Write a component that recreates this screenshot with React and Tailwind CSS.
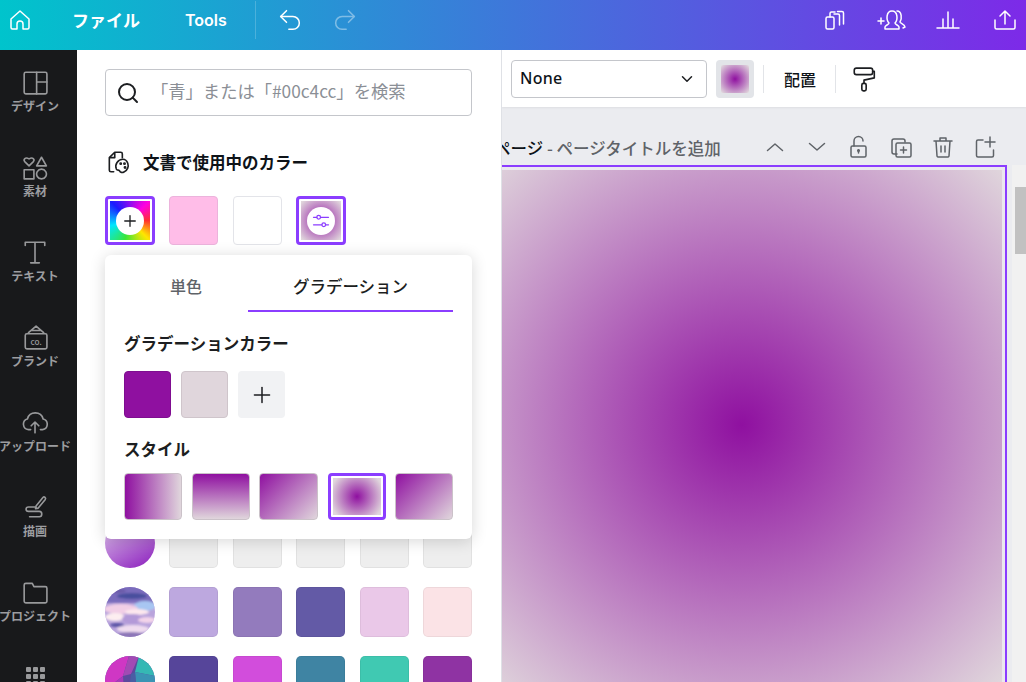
import { ChevronDown, Search, Plus, Undo2, Redo2 } from "lucide-react";

const jp = "font-['Noto_Sans_CJK_JP','Noto_Sans',sans-serif]";

function RailItem({ label, children }) {
  return (
    <div className="flex h-[85px] w-[70px] shrink-0 flex-col items-center pt-[19px]">
      <div className="h-[26px] w-[26px] text-[#98999b]">{children}</div>
      <div className="mt-[4px] text-[12px] leading-[14px] font-bold whitespace-nowrap text-[#9c9da0]">{label}</div>
    </div>
  );
}

function IconSvg({ children, className = "" }) {
  return (
    <svg viewBox="0 0 24 24" fill="none" stroke="currentColor" strokeWidth="1.5" strokeLinecap="round" strokeLinejoin="round" className={"h-full w-full " + className}>
      {children}
    </svg>
  );
}

function CloudCircle() {
  return (
    <svg viewBox="0 0 50 50" className="h-[50px] w-[50px] shrink-0 rounded-full">
      <defs>
        <filter id="soft"><feGaussianBlur stdDeviation="0.9" /></filter>
      </defs>
      <rect width="50" height="50" fill="#b9a4dc" />
      <g filter="url(#soft)">
        <rect x="-2" y="-2" width="54" height="18" fill="#7a6cbc" />
        <ellipse cx="27" cy="9" rx="15" ry="3" fill="#4a4f9e" />
        <ellipse cx="12" cy="4" rx="9" ry="2" fill="#6a5aa8" />
        <ellipse cx="40" cy="19" rx="11" ry="5" fill="#a8c6f2" />
        <ellipse cx="16" cy="22" rx="17" ry="5" fill="#f2cfe6" />
        <ellipse cx="32" cy="25" rx="12" ry="3" fill="#fde8ee" />
        <ellipse cx="10" cy="30" rx="10" ry="4" fill="#fdeef0" />
        <ellipse cx="28" cy="32" rx="11" ry="5" fill="#b39ad8" />
        <ellipse cx="42" cy="33" rx="9" ry="3" fill="#f3d4ea" />
        <ellipse cx="12" cy="38" rx="7" ry="2" fill="#5b55a6" />
        <ellipse cx="28" cy="42" rx="16" ry="4" fill="#efdcef" />
        <ellipse cx="26" cy="48" rx="14" ry="3" fill="#8d77b8" />
      </g>
    </svg>
  );
}

function PolyCircle() {
  return (
    <svg viewBox="0 0 50 50" className="h-[50px] w-[50px] shrink-0 rounded-full">
      <rect width="50" height="50" fill="#5c4a9e" />
      <polygon points="0,0 24,0 18,20 0,34" fill="#cf37c4" />
      <polygon points="0,34 18,20 20,50 0,50" fill="#a83ab8" />
      <polygon points="24,0 34,0 26,18 18,20" fill="#a24ab4" />
      <polygon points="34,0 50,0 50,20 30,16" fill="#35b8b4" />
      <polygon points="30,16 50,20 50,50 32,40" fill="#3a94b4" />
      <polygon points="26,18 30,16 32,40 24,34" fill="#4a5ea4" />
    </svg>
  );
}

const rows = [
  { circle: <div className="h-[50px] w-[50px] shrink-0 rounded-full bg-[linear-gradient(150deg,#e4cff0,#8a1cbc)]" />, colors: ["#eeeeee", "#eeeeee", "#eeeeee", "#eeeeee", "#eeeeee"] },
  { circle: <CloudCircle />, colors: ["#bda8df", "#937bbd", "#635aa6", "#eac8e8", "#fbe3e6"] },
  { circle: <PolyCircle />, colors: ["#56459a", "#d24ddc", "#3f84a3", "#40c9b2", "#8f33a3"] },
];

const styles = [
  { bg: "bg-[linear-gradient(90deg,#8f10a0,#e0d6dc)]", w: "w-[58px]" },
  { bg: "bg-[linear-gradient(180deg,#8f10a0,#e0d6dc)]", w: "w-[58px]" },
  { bg: "bg-[linear-gradient(135deg,#8f10a0,#e0d6dc)]", w: "w-[59px]" },
  { bg: "", w: "" },
  { bg: "bg-[linear-gradient(135deg,#8f10a0,#e0d6dc)]", w: "w-[58px]" },
];

function Swatch({ color }) {
  return <div className="h-[50px] w-[49px] rounded-[5px] border border-black/5" style={{ backgroundColor: color }} />;
}

export default function App() {
  return (
    <div className={"flex h-[682px] w-[1026px] flex-col overflow-hidden bg-white " + jp}>
      {/* top bar */}
      <header className="flex h-[50px] shrink-0 items-center bg-[linear-gradient(90deg,#00c4cc,#7d2ae8)] pb-[10px] text-white">
        <div className="ml-[8px] h-[24px] w-[24px]">
          <IconSvg>
            <path d="M3 11 12 3l9 8v8.500a1.500 1.500 0 0 1-1.500 1.500H15v-5a3 3 0 0 0-6 0v5H4.500A1.500 1.500 0 0 1 3 19.500Z" />
          </IconSvg>
        </div>
        <div className="ml-[40px] text-[17px] font-bold">ファイル</div>
        <div className="ml-[45px] font-['Inter',sans-serif] text-[16px] font-semibold">Tools</div>
        <div className="ml-[28px] h-[38px] w-px bg-white/20" />
        <Undo2 className="ml-[20px] h-[28px] w-[28px]" strokeWidth={1.3} />
        <Redo2 className="ml-[27px] h-[28px] w-[28px] opacity-40" strokeWidth={1.3} />
        <div className="flex-1" />
        <div className="mr-[30px] h-[24px] w-[24px]">
          <IconSvg>
            <rect x="3" y="9" width="8" height="12" rx="1.500" />
            <path d="M7 9V5.500A1.500 1.500 0 0 1 8.500 4H12M11 6h4a1.500 1.500 0 0 1 1.500 1.500V17M14.500 3.500H19a1.500 1.500 0 0 1 1.500 1.500v11" />
          </IconSvg>
        </div>
        <div className="mr-[29px] h-[24px] w-[30px]">
          <svg viewBox="0 0 30 24" fill="none" stroke="currentColor" strokeWidth="1.5" strokeLinecap="round" strokeLinejoin="round" className="h-full w-full">
            <path d="M1 13h6M4 10v6" />
            <path d="M8 21v-2c0-1.500 4-2.500 4-4-3-3-3-12 3-12s6 9 3 12c0 1.500 4 2.500 4 4v2Z" />
            <path d="M20 3c5 0 5 8 3 11 0 1.500 5 2 5 5l-2 1" />
          </svg>
        </div>
        <div className="mr-[33px] h-[24px] w-[24px]">
          <IconSvg>
            <path d="M1 20h22M7 19v-8M12 19V4M17 19v-8" />
          </IconSvg>
        </div>
        <div className="mr-[9px] h-[24px] w-[24px]">
          <IconSvg>
            <path d="M2 12v7.500A1.500 1.500 0 0 0 3.500 21h17a1.500 1.500 0 0 0 1.500-1.500V12M12 16V3M7 8l5-5 5 5" />
          </IconSvg>
        </div>
      </header>

      <div className="flex min-h-0 flex-1">
        {/* left rail */}
        <nav className="flex w-[77px] shrink-0 flex-col overflow-hidden bg-[#18191b]">
          <RailItem label="デザイン">
            <IconSvg>
              <rect x="2" y="3" width="21" height="20" rx="1.500" /><path d="M13.500 3v20M13.500 12H23" />
            </IconSvg>
          </RailItem>
          <RailItem label="素材">
            <IconSvg>
              <path d="M6.500 11 2.500 7c-1.500-2 .5-4.500 4-2.500 3.500-2 5.500.5 4 2.500ZM18 3l4.500 8h-9ZM2 14.500h9v8.500H2ZM18 14a4.500 4.500 0 1 0 .01 0Z" />
            </IconSvg>
          </RailItem>
          <RailItem label="テキスト">
            <IconSvg>
              <path d="M3 6V3h18v3M12 3v19M8 22h8" />
            </IconSvg>
          </RailItem>
          <RailItem label="ブランド">
            <IconSvg>
              <rect x="3" y="9" width="20" height="14" rx="1.500" /><path d="m6 8 7-6 7 6M9 6h8" />
              <text x="13" y="19" fontSize="6" fontWeight="700" textAnchor="middle" fill="currentColor" stroke="none">CO.</text>
            </IconSvg>
          </RailItem>
          <RailItem label="アップロード">
            <IconSvg>
              <path d="M8 19H6a5 5 0 0 1-1-9.800 7.500 7.500 0 0 1 14.500 0A5 5 0 0 1 19 19h-2M12 22V12M8.500 15.500 12 12l3.500 3.500" />
            </IconSvg>
          </RailItem>
          <RailItem label="描画">
            <IconSvg>
              <path d="M13 11l6.500-8c1-1 3 .5 2 2L15 13l-2.500.5Z" />
              <path d="M12 12H6c-3 0-3 4 0 4h10c3 0 3 5 0 5H7" />
            </IconSvg>
          </RailItem>
          <RailItem label="プロジェクト">
            <IconSvg>
              <path d="M2 5.500A1.500 1.500 0 0 1 3.500 4h6l1.500 3h10.500A1.500 1.500 0 0 1 23 8.500v12a1.500 1.500 0 0 1-1.500 1.500h-18A1.500 1.500 0 0 1 2 20.500Z" />
            </IconSvg>
          </RailItem>
          <div className="flex w-[70px] justify-center pt-[22px]">
            <div className="grid grid-cols-3 gap-[2px]">
              {Array.from({ length: 9 }).map((_, i) => (
                <div key={i} className="h-[5px] w-[5px] rounded-[1px] bg-[#98999b]" />
              ))}
            </div>
          </div>
        </nav>

        {/* colour panel */}
        <aside className="relative w-[425px] shrink-0 overflow-hidden border-r border-[#dfe1e6] bg-white pt-[19px] pl-[28px]">
          <div className="flex h-[47px] w-[367px] items-center rounded-[4px] border border-[#c4c6cb] pl-[10px]">
            <Search className="h-[24px] w-[24px] text-[#1c1e21]" strokeWidth={2} />
            <span className="ml-[11px] pb-[4px] text-[17.3px] whitespace-nowrap text-[#8b8f96] [text-spacing-trim:space-all]">「青」または「#00c4cc」を検索</span>
          </div>

          <div className="mt-[32px] flex h-[28px] items-center">
            <div className="h-[26px] w-[26px] text-[#1c1e21]">
              <IconSvg>
                <path d="M8 21H5.500A1.500 1.500 0 0 1 4 19.500V8l5-5h5.500A1.500 1.500 0 0 1 16 4.500V8" />
                <path d="M9 3.500V8H4.500" />
                <path d="M16.500 9.500a6.500 6.500 0 0 0-6 9c.8 1.500 2.500.5 3 1.700.5 1.500 2.500 1.800 4 1 3.500-1.500 4.500-5.200 3.500-8-.8-2.200-2.500-3.700-4.500-3.700Z" />
                <circle cx="14.500" cy="13.500" r=".6" />
                <circle cx="18" cy="13.500" r=".6" />
                <circle cx="18.500" cy="17" r=".6" />
              </IconSvg>
            </div>
            <span className="ml-[12px] text-[16.5px] font-bold text-[#0e1318]">文書で使用中のカラー</span>
          </div>

          <div className="mt-[20px] flex h-[49px]">
            <div className="flex h-[49px] w-[50px] items-center justify-center rounded-[4px] border-[3px] border-[#8b3dff] p-[2px]">
              <div className="flex h-full w-full items-center justify-center bg-[conic-gradient(from_315deg,#1a1aff_0deg,#ff00e0_90deg,#ff3030_135deg,#ffe600_180deg,#39e639_240deg,#00e6ff_300deg,#1a1aff_360deg)]">
                <div className="flex h-[28px] w-[28px] shrink-0 items-center justify-center rounded-full bg-white">
                  <Plus className="h-[18px] w-[18px] text-[#1c1e21]" strokeWidth={1.75} />
                </div>
              </div>
            </div>
            <div className="ml-[14px] h-[49px] w-[49px] rounded-[4px] border border-[#ecb3dc] bg-[#ffbde8]" />
            <div className="ml-[15px] h-[49px] w-[49px] rounded-[4px] border border-[#e3e4e9] bg-white" />
            <div className="ml-[14px] flex h-[49px] w-[50px] items-center justify-center rounded-[4px] border-[3px] border-[#8b3dff] p-[2px]">
              <div className="flex h-full w-full items-center justify-center bg-[radial-gradient(circle,#8f10a0,#e0d6dc_95%)]">
                <div className="flex h-[28px] w-[28px] shrink-0 items-center justify-center rounded-full bg-white">
                  <div className="h-[20px] w-[20px] text-[#8b3dff]">
                    <IconSvg>
                      <path d="M3 7.500h4M11.500 7.500H21M3 16.500h10M17.500 16.500H21" />
                      <circle cx="9.200" cy="7.500" r="2.200" />
                      <circle cx="15.300" cy="16.500" r="2.200" />
                    </IconSvg>
                  </div>
                </div>
              </div>
            </div>
          </div>

          {/* swatch rows under the popup */}
          <div className="mt-[273px] flex flex-col gap-[19px]">
            {rows.map((row, i) => (
              <div key={i} className="flex h-[50px] items-center">
                {row.circle}
                <div className="ml-[14px] flex gap-[14.5px]">
                  {row.colors.map((c, j) => (
                    <Swatch key={j} color={c} />
                  ))}
                </div>
              </div>
            ))}
          </div>

          {/* gradient popup */}
          <div className="absolute top-[205px] left-[28px] h-[284px] w-[367px] rounded-[6px] bg-white shadow-[0_2px_16px_rgba(0,0,0,0.16)]">
            <div className="flex h-[57px] px-[19px]">
              <div className="flex w-[124px] items-center justify-center pt-[4px] text-[16px] font-medium text-[#5f6368]">単色</div>
              <div className="flex w-[205px] items-center justify-center border-b-2 border-[#8b3dff] pt-[7px] text-[16.5px] font-medium text-[#1c1e21]">グラデーション</div>
            </div>
            <div className="mt-[21px] px-[19px] text-[16.5px] leading-[20px] font-bold text-[#1c1e21]">グラデーションカラー</div>
            <div className="mt-[18px] flex gap-[10px] px-[19px]">
              <div className="h-[47px] w-[47px] rounded-[4px] border border-[#7f0d90] bg-[#8f10a0]" />
              <div className="h-[47px] w-[47px] rounded-[4px] border border-[#cfc5cb] bg-[#e0d6dc]" />
              <div className="flex h-[47px] w-[47px] items-center justify-center rounded-[4px] bg-[#f1f2f4]">
                <Plus className="h-[26px] w-[26px] text-[#1c1e21]" strokeWidth={1.4} />
              </div>
            </div>
            <div className="mt-[21px] px-[19px] text-[16.5px] leading-[20px] font-bold text-[#1c1e21]">スタイル</div>
            <div className="mt-[14px] flex justify-between px-[19px]">
              {styles.map((s, i) =>
                s.bg ? (
                  <div key={i} className={"h-[47px] rounded-[4px] border border-[#cbc2c9] " + s.w + " " + s.bg} />
                ) : (
                  <div key={i} className="h-[47px] w-[58px] rounded-[4px] border-[3px] border-[#8b3dff] p-[2px]">
                    <div className="h-full w-full bg-[radial-gradient(circle,#8f10a0,#e0d6dc_90%)]" />
                  </div>
                )
              )}
            </div>
          </div>
        </aside>

        {/* editor */}
        <main className="flex min-w-0 flex-1 flex-col overflow-hidden bg-[#ebecf0]">
          <div className="flex h-[57px] shrink-0 items-center bg-white pl-[9px] shadow-[0_1px_2px_rgba(0,0,0,0.06)]">
            <div className="flex h-[38px] w-[196px] items-center justify-between rounded-[4px] border border-[#c4c6cb] pr-[10px] pl-[8px]">
              <span className="pb-[2px] font-['Noto_Sans',sans-serif] text-[16px] font-medium tracking-[0.3px] text-[#0e1318]">None</span>
              <ChevronDown className="h-[18px] w-[18px] text-[#1c1e21]" strokeWidth={2} />
            </div>
            <div className="ml-[9px] flex h-[38px] w-[38px] items-center justify-center rounded-[4px] bg-[#e2e4e8]">
              <div className="h-[28px] w-[28px] rounded-[2px] bg-[radial-gradient(circle,#8f10a0,#e0d6dc_95%)]" />
            </div>
            <div className="ml-[9px] h-[28px] w-px bg-[#e2e4e8]" />
            <div className="ml-[20px] text-[16px] font-medium text-[#0e1318]">配置</div>
            <div className="ml-[19px] h-[28px] w-px bg-[#e2e4e8]" />
            <div className="ml-[15px] h-[26px] w-[26px] text-[#1c1e21]">
              <IconSvg>
                <rect x="3" y="2" width="17" height="6" rx="2" />
                <path d="M20 5h1.500v6L12 13v3" />
                <rect x="10" y="16" width="4" height="7" rx="1.500" />
              </IconSvg>
            </div>
          </div>

          <div className="relative flex h-[58px] shrink-0 items-center justify-between pr-[29px] text-[#5f6368]">
            <div className="ml-[-8px] pt-[24px] text-[16.5px] font-medium whitespace-nowrap">
              <span className="text-[#0e1318]">ページ</span>
              <span> - ページタイトルを追加</span>
            </div>
            <div className="flex items-center gap-[18px] pt-[22px]">
              <div className="h-[24px] w-[24px]"><IconSvg><path d="M4.500 15.500 12 9l7.500 6.500" /></IconSvg></div>
              <div className="h-[24px] w-[24px]"><IconSvg><path d="M4.500 8.500 12 15l7.500-6.500" /></IconSvg></div>
              <div className="h-[24px] w-[24px]"><IconSvg><rect x="4" y="11" width="15" height="11" rx="1.500" /><path d="M7 11V6a4.500 4.500 0 0 1 9 0M11.500 15v3" /><circle cx="11.500" cy="15.500" r=".8" /></IconSvg></div>
              <div className="h-[24px] w-[24px]"><IconSvg><path d="M8 19H5a2 2 0 0 1-2-2V6a2 2 0 0 1 2-2h9a2 2 0 0 1 2 2v1" /><rect x="7" y="8" width="15" height="14" rx="1.500" /><path d="M14.500 12v6M11.500 15h6" /></IconSvg></div>
              <div className="h-[24px] w-[24px]"><IconSvg><path d="M3 6h18M9 6V3h6v3M5 6l1 15a1.500 1.500 0 0 0 1.500 1h9a1.500 1.500 0 0 0 1.500-1l1-15M10 11v6M14 11v6" /></IconSvg></div>
              <div className="h-[24px] w-[24px]"><IconSvg><path d="M10 5H5a1.500 1.500 0 0 0-1.500 1.500v14A1.500 1.500 0 0 0 5 22h14a1.500 1.500 0 0 0 1.500-1.500V15M17 2v10M12 7h10" /></IconSvg></div>
            </div>
          </div>

          <div className="flex min-h-0 flex-1">
            <div className="ml-[-1px] flex h-[600px] w-[506px] shrink-0 border-2 border-l-0 border-[#8b3dff] bg-[#ebe8ee] pt-[3px] pr-[3px]">
              <div className="h-[530px] w-full bg-[radial-gradient(circle_365px_at_241px_255px,#8f10a0_0%,#e0d6dc_100%)]" />
            </div>
            <div className="ml-[5px] flex-1 bg-[#f1f1f1] pt-[22px] pl-[3px]">
              <div className="h-[67px] w-full bg-[#c1c1c1]" />
            </div>
          </div>
        </main>
      </div>
    </div>
  );
}
